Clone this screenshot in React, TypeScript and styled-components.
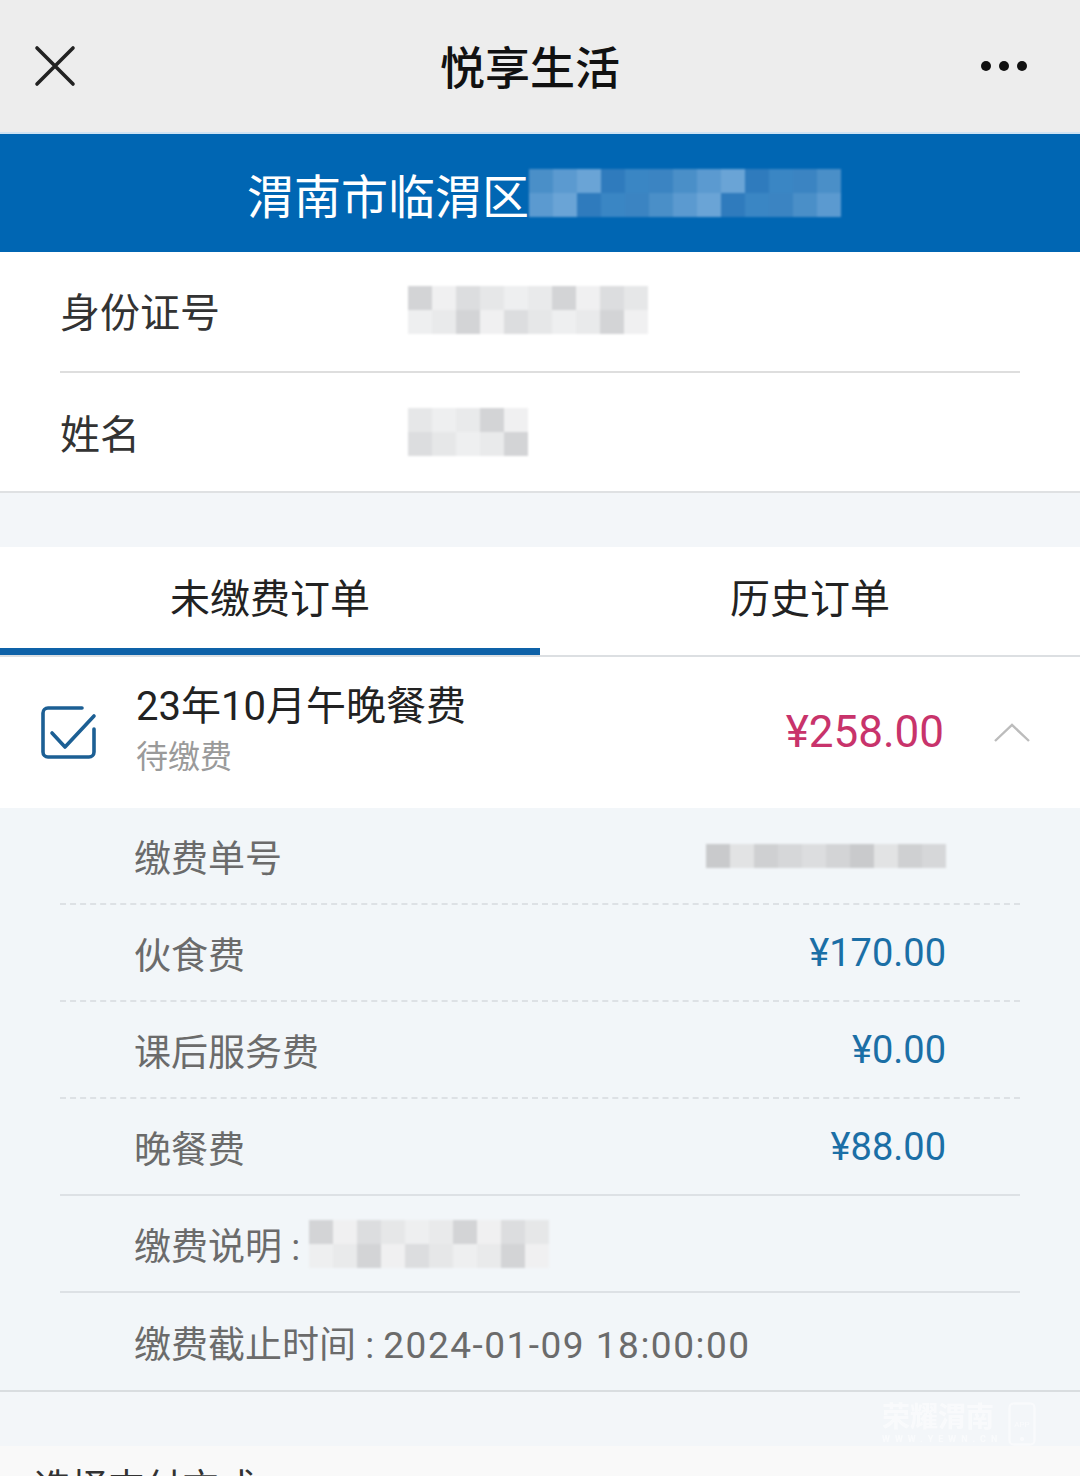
import styled, { createGlobalStyle } from 'styled-components'

const GlobalStyle = createGlobalStyle`
  html, body {
    margin: 0;
    padding: 0;
    background: #f3f6f9;
    font-family: "Roboto", "Noto Sans CJK SC", sans-serif;
  }
  * { box-sizing: border-box; }
`

const Page = styled.div`
  width: 1080px;
  height: 1476px;
  overflow: hidden;
  position: relative;
  background: #f3f6f9;
`

const NavBar = styled.div`
  height: 132px;
  background: #ededed;
  display: grid;
  grid-template-columns: 1fr auto 1fr;
  align-items: center;
  padding: 0 52px 0 34px;
`

const NavTitle = styled.div`
  font-size: 45px;
  font-weight: 500;
  color: #111;
  margin-top: -2px;
  margin-right: 2px;
`

const NavRight = styled.div`
  display: flex;
  justify-content: flex-end;
`

const Banner = styled.div`
  height: 120px;
  background: #0066b3;
  border-top: 2px solid #cfe3f3;
  display: flex;
  align-items: center;
  justify-content: center;
  color: #fff;
  font-size: 47px;
  padding-left: 8px;
`

const Mosaic = styled.div<{ $cols: number; $cell: number }>`
  display: grid;
  grid-template-columns: repeat(${p => p.$cols}, ${p => p.$cell}px);
  grid-auto-rows: ${p => p.$cell}px;
  filter: blur(1.2px);
`

const Cell = styled.div<{ $tone: string }>`
  background: ${p => p.$tone};
`

const InfoCard = styled.div`
  background: #fff;
  border-bottom: 2px solid #dfe1e3;
  padding: 0 60px;
`

const InfoRow = styled.div<{ $last?: boolean }>`
  height: ${p => (p.$last ? 118 : 121)}px;
  display: flex;
  align-items: center;
  border-bottom: ${p => (p.$last ? 'none' : '2px solid #dedede')};
  font-size: 40px;
  color: #333;
  padding-bottom: ${p => (p.$last ? 0 : 4)}px;
`

const InfoLabel = styled.div`
  width: 348px;
`

const Gap = styled.div<{ $h: number }>`
  height: ${p => p.$h}px;
`

const Tabs = styled.div`
  display: flex;
  background: #fff;
  border-bottom: 2px solid #dcdfe2;
`

const Tab = styled.div<{ $active?: boolean }>`
  flex: 1;
  height: 108px;
  display: flex;
  align-items: center;
  justify-content: center;
  font-size: 40px;
  color: #222;
  padding-bottom: 4px;
  border-bottom: 7px solid ${p => (p.$active ? '#0e62a8' : 'transparent')};
`

const OrderHead = styled.div`
  height: 151px;
  background: #fff;
  display: flex;
  align-items: center;
  padding: 0 50px 0 40px;
`

const OrderInfo = styled.div`
  flex: 1;
  margin-left: 36px;
  display: flex;
  flex-direction: column;
  margin-top: -4px;
`

const OrderTitle = styled.div`
  font-size: 40px;
  color: #222;
  line-height: 52px;
`

const OrderStatus = styled.div`
  font-size: 32px;
  color: #9a9a9a;
  line-height: 48px;
`

const OrderPrice = styled.div`
  font-size: 44px;
  color: #c8336b;
  margin-right: 50px;
  margin-top: -2px;
`

const Details = styled.div`
  background: #f2f6f9;
  border-bottom: 2px solid #d9dde0;
  padding: 0 60px;
`

const DetailRow = styled.div<{ $line?: 'dashed' | 'solid' | 'none' }>`
  height: 97px;
  display: flex;
  align-items: center;
  justify-content: space-between;
  padding: 0 74px;
  font-size: 37px;
  color: #6b6b6b;
  border-bottom: ${p => (p.$line === 'none' ? '0' : `2px ${p.$line} #dde1e5`)};
`

const DetailValue = styled.div`
  color: #1b6fa6;
  font-size: 38px;
`

const DetailLeft = styled.div`
  display: flex;
  align-items: center;
`

const Deadline = styled.span`
  letter-spacing: 1.5px;
`

const PaySection = styled.div`
  background: #f9f9f9;
  height: 60px;
  padding: 12px 34px 0;
  font-size: 37px;
  color: #333;
`

const Watermark = styled.div`
  position: absolute;
  left: 882px;
  top: 1402px;
  display: flex;
  align-items: center;
  gap: 6px;
  opacity: 0.55;
  color: #fff;
`

const WmText = styled.div`
  display: flex;
  flex-direction: column;
  font-size: 28px;
  font-weight: 700;
  line-height: 30px;
  small {
    font-size: 9px;
    letter-spacing: 5px;
    line-height: 12px;
  }
`

const light = ['#e6e7e8', '#dcdddf', '#eeeff0', '#d3d4d6', '#e9eaeb', '#f0f0f1']
const mid = ['#d6d7d9', '#cfd0d2', '#dcdddf', '#c9cacc', '#d3d4d6', '#e2e3e4']
const blues = ['#4a8fc8', '#3b84c2', '#5b9ad0', '#2f7bbd', '#6aa4d6', '#3a86c4']

const pick = (seed: number, n: number, pal: string[]) =>
  Array.from({ length: n }, (_, i) => pal[(i * 7 + seed * 3 + (i % 3)) % pal.length])

const MosaicBlock = ({ cols, rows, cell, seed, pal = light }: { cols: number; rows: number; cell: number; seed: number; pal?: string[] }) => (
  <Mosaic $cols={cols} $cell={cell}>
    {pick(seed, cols * rows, pal).map((c, i) => (
      <Cell key={i} $tone={c} />
    ))}
  </Mosaic>
)

const App = () => {
  return (
    <Page>
      <GlobalStyle />
      <NavBar>
        <svg width="42" height="42" viewBox="0 0 42 42">
          <path d="M3 3 L39 39 M39 3 L3 39" stroke="#222" strokeWidth="3.6" strokeLinecap="round" />
        </svg>
        <NavTitle>悦享生活</NavTitle>
        <NavRight>
          <svg width="48" height="12" viewBox="0 0 48 12">
            <circle cx="6" cy="6" r="5" fill="#111" />
            <circle cx="24" cy="6" r="5" fill="#111" />
            <circle cx="42" cy="6" r="5" fill="#111" />
          </svg>
        </NavRight>
      </NavBar>

      <Banner>
        渭南市临渭区
        <MosaicBlock cols={13} rows={2} cell={24} seed={2} pal={blues} />
      </Banner>

      <InfoCard>
        <InfoRow>
          <InfoLabel>身份证号</InfoLabel>
          <MosaicBlock cols={10} rows={2} cell={24} seed={1} />
        </InfoRow>
        <InfoRow $last>
          <InfoLabel>姓名</InfoLabel>
          <MosaicBlock cols={5} rows={2} cell={24} seed={4} />
        </InfoRow>
      </InfoCard>

      <Gap $h={54} />

      <Tabs>
        <Tab $active>未缴费订单</Tab>
        <Tab>历史订单</Tab>
      </Tabs>

      <OrderHead>
        <svg width="60" height="60" viewBox="0 0 60 60">
          <path
            d="M42 5 H8 a5 5 0 0 0 -5 5 V49 a5 5 0 0 0 5 5 H49 a5 5 0 0 0 5 -5 V26"
            fill="none"
            stroke="#1c5f94"
            strokeWidth="3.6"
            strokeLinecap="round"
          />
          <path d="M12 30 L25 44 L54 13" fill="none" stroke="#1c5f94" strokeWidth="3.6" strokeLinecap="round" strokeLinejoin="round" />
        </svg>
        <OrderInfo>
          <OrderTitle>23年10月午晚餐费</OrderTitle>
          <OrderStatus>待缴费</OrderStatus>
        </OrderInfo>
        <OrderPrice>¥258.00</OrderPrice>
        <svg width="36" height="20" viewBox="0 0 36 20">
          <path d="M1 18 L18 2 L35 18" fill="none" stroke="#bcbcbc" strokeWidth="2.4" />
        </svg>
      </OrderHead>

      <Details>
        <DetailRow $line="dashed">
          <span>缴费单号</span>
          <MosaicBlock cols={10} rows={1} cell={24} seed={3} pal={mid} />
        </DetailRow>
        <DetailRow $line="dashed">
          <span>伙食费</span>
          <DetailValue>¥170.00</DetailValue>
        </DetailRow>
        <DetailRow $line="dashed">
          <span>课后服务费</span>
          <DetailValue>¥0.00</DetailValue>
        </DetailRow>
        <DetailRow $line="solid">
          <span>晚餐费</span>
          <DetailValue>¥88.00</DetailValue>
        </DetailRow>
        <DetailRow $line="solid">
          <DetailLeft>
            缴费说明 :&nbsp;
            <MosaicBlock cols={10} rows={2} cell={24} seed={5} />
          </DetailLeft>
        </DetailRow>
        <DetailRow $line="none">
          <span>
            缴费截止时间 : <Deadline>2024-01-09 18:00:00</Deadline>
          </span>
        </DetailRow>
      </Details>

      <Gap $h={54} />

      <PaySection>选择支付方式</PaySection>

      <Watermark>
        <WmText>
          荣耀渭南
          <small>WWW.YEWN.CN</small>
        </WmText>
        <svg width="28" height="44" viewBox="0 0 28 44">
          <rect x="1.5" y="1.5" width="25" height="41" rx="4" fill="none" stroke="#fff" strokeWidth="2" />
          <text x="14" y="25" fontSize="8" fill="#fff" textAnchor="middle" fontFamily="Roboto">APP</text>
          <circle cx="14" cy="37" r="2" fill="#fff" />
        </svg>
      </Watermark>
    </Page>
  )
}

export default App
